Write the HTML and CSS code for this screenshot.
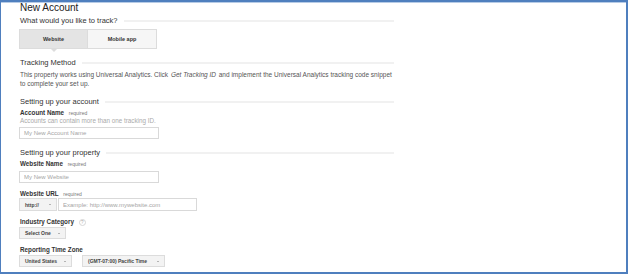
FILE: index.html
```html
<!DOCTYPE html>
<html lang="en">
<head>
    <meta charset="UTF-8">
    <meta name="viewport" content="width=device-width, initial-scale=1.0">
    <title>New Account</title>
    <link rel="stylesheet" href="styles.css">
</head>
<body>
    <div class="frame">
        <div class="account-form">
            <h1 class="title">New Account</h1>

            <div class="section-head first">What would you like to track?</div>
            <div class="tabs">
                <button class="tab active">Website</button>
                <button class="tab">Mobile app</button>
            </div>

            <div class="section-head tracking">Tracking Method</div>
            <p class="intro">This property works using Universal Analytics. Click <em>Get Tracking ID</em> and implement the Universal Analytics tracking code snippet to complete your set up.</p>

            <div class="section-head">Setting up your account</div>
            <div class="field-label first-label">Account Name <span class="req">required</span></div>
            <div class="help">Accounts can contain more than one tracking ID.</div>
            <input class="text-input account-input" type="text" placeholder="My New Account Name">

            <div class="section-head">Setting up your property</div>
            <div class="field-label first-label">Website Name <span class="req">required</span></div>
            <input class="text-input name-input" type="text" placeholder="My New Website">

            <div class="field-label">Website URL <span class="req">required</span></div>
            <div class="url-row">
                <button class="dropdown proto">http:// <span class="caret"></span></button>
                <input class="text-input url-input" type="text" placeholder="Example: http://www.mywebsite.com">
            </div>

            <div class="field-label">Industry Category <span class="hint">?</span></div>
            <div class="select-row">
                <button class="dropdown industry">Select One <span class="caret"></span></button>
            </div>

            <div class="field-label">Reporting Time Zone</div>
            <div class="select-row zones">
                <button class="dropdown country">United States <span class="caret"></span></button>
                <button class="dropdown zone">(GMT-07:00) Pacific Time <span class="caret"></span></button>
            </div>
        </div>
    </div>
</body>
</html>
```

FILE: styles.css
```css
html, body {
    margin: 0;
    padding: 0;
    background-color: #fff;
}
body {
    font-family: "Liberation Sans", Arial, sans-serif;
    color: #333;
}
.frame {
    box-sizing: border-box;
    width: 628px;
    height: 274px;
    border: 2px solid #4f7fbe;
    border-left-width: 1px;
    overflow: hidden;
    box-shadow: inset 0 1px 0 #b6cbe6;
}
.account-form {
    width: 374px;
    margin-left: 19px;
}
.title {
    margin: 0;
    font-size: 10px;
    line-height: 11px;
    font-weight: normal;
    color: #222;
}
.section-head {
    display: flex;
    align-items: center;
    gap: 6px;
    margin-top: 9px;
    font-size: 7.5px;
    line-height: 9px;
    color: #333;
    white-space: nowrap;
}
.section-head::after {
    content: "";
    flex: 1;
    height: 2px;
    background-color: #f1f1f1;
}
.section-head.first {
    margin-top: 3px;
}
.tabs {
    display: flex;
    margin-top: 4px;
    margin-left: -1px;
    width: 138px;
}
.tab {
    position: relative;
    box-sizing: border-box;
    width: 69px;
    height: 20px;
    padding: 0;
    border: 1px solid #dcdcdc;
    background-color: #f6f6f6;
    font-family: inherit;
    font-size: 5.5px;
    font-weight: bold;
    color: #333;
}
.tab + .tab {
    border-left: none;
}
.tab.active {
    background-color: #e4e4e4;
}
.tab.active::after {
    content: "";
    position: absolute;
    left: 31px;
    bottom: -4px;
    border-left: 3px solid transparent;
    border-right: 3px solid transparent;
    border-top: 3px solid #dcdcdc;
}
.section-head.tracking {
    margin-top: 9px;
}
.intro {
    margin: 4px 0 0;
    font-size: 6.5px;
    line-height: 8.5px;
    color: #555;
}
.intro em {
    display: inline-block;
    margin: 0 1px;
}
.field-label {
    margin-top: 7px;
    font-size: 6.3px;
    line-height: 8px;
    font-weight: bold;
    color: #333;
}
.field-label.first-label {
    margin-top: 3px;
}
.req {
    margin-left: 3px;
    font-size: 5px;
    font-weight: normal;
    color: #777;
}
.hint {
    display: inline-block;
    box-sizing: border-box;
    width: 7px;
    height: 7px;
    margin-left: 3px;
    border: 1px solid #d6d6d6;
    border-radius: 50%;
    font-size: 4.5px;
    line-height: 5px;
    text-align: center;
    font-weight: normal;
    color: #aaa;
    vertical-align: middle;
}
.help {
    font-size: 6.3px;
    line-height: 8px;
    color: #aaa;
}
.text-input {
    display: block;
    box-sizing: border-box;
    height: 12px;
    padding: 0 4px;
    border: 1px solid #d9d9d9;
    font-family: inherit;
    font-size: 6px;
    color: #333;
    outline: none;
}
.text-input::placeholder {
    color: #a5a5a5;
}
.account-input {
    width: 140px;
    margin-top: 2px;
    margin-left: -1px;
}
.name-input {
    width: 140px;
    margin-top: 3px;
    margin-left: -1px;
}
.url-row {
    display: flex;
    gap: 1px;
    margin-left: -1px;
}
.url-input {
    width: 139px;
    height: 13px;
}
.dropdown {
    display: flex;
    align-items: center;
    justify-content: space-between;
    box-sizing: border-box;
    height: 12px;
    padding: 0 5px;
    border: 1px solid #dcdcdc;
    background-color: #f3f3f3;
    font-family: inherit;
    font-size: 5px;
    font-weight: bold;
    color: #444;
}
.caret {
    width: 0;
    height: 0;
    border-left: 1.5px solid transparent;
    border-right: 1.5px solid transparent;
    border-top: 1.5px solid #777;
}
.proto {
    width: 38px;
    height: 13px;
}
.select-row {
    display: flex;
    gap: 10px;
    margin-top: 1px;
    margin-left: -1px;
}
.industry {
    width: 47px;
}
.country {
    width: 53px;
}
.zone {
    width: 83px;
}
```
